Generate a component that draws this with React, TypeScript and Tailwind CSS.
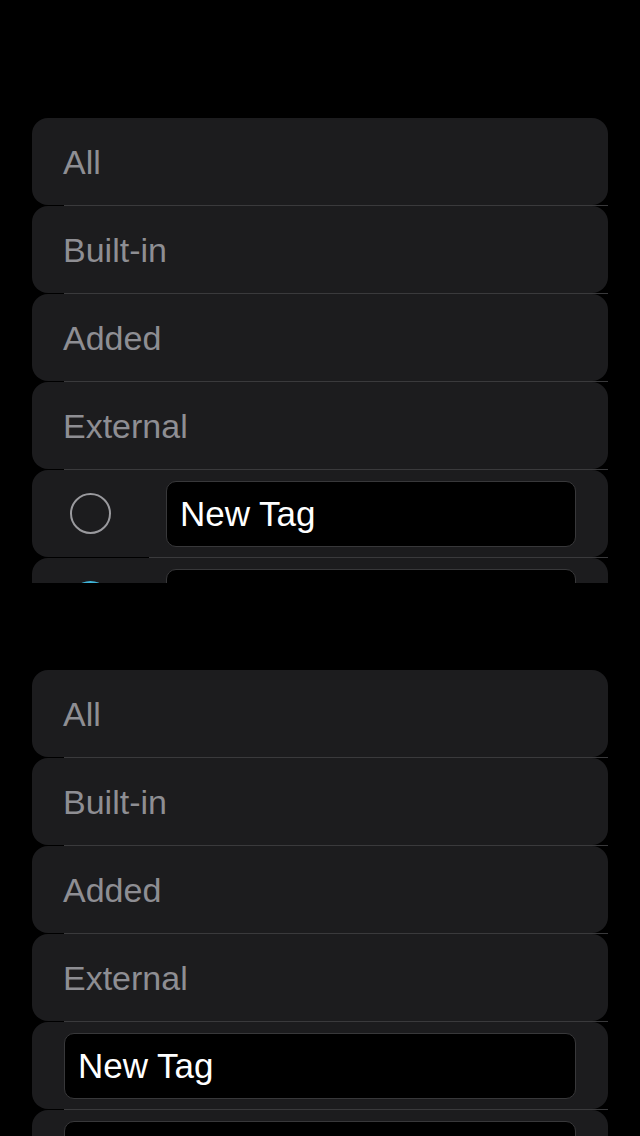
import React from "react";

const labels = ["All", "Built-in", "Added", "External"];

function LabelRow({ text }: { text: string }) {
  return (
    <>
      <div className="h-[87px] shrink-0 rounded-2xl bg-[#1c1c1e] flex items-center pl-[31px]">
        <span
          className="text-[34px] leading-none text-[#8e8e93]"
          style={{ fontFamily: '"Liberation Sans", Arial, sans-serif' }}
        >
          {text}
        </span>
      </div>
      <div className="h-px shrink-0 ml-[32px] bg-[#3a3a3c]" />
    </>
  );
}

function TagInput({ value }: { value: string }) {
  return (
    <div className="flex-1 h-[66px] rounded-[10px] border border-[#38383a] bg-black flex items-center pl-[13px]">
      <span
        className="text-[35px] leading-none text-white"
        style={{ fontFamily: '"Liberation Sans", Arial, sans-serif' }}
      >
        {value}
      </span>
    </div>
  );
}

function RadioRow({ value, selected }: { value: string; selected?: boolean }) {
  return (
    <>
      <div className="h-[87px] shrink-0 rounded-2xl bg-[#1c1c1e] flex items-center pl-[38px] pr-[32px]">
        {selected ? (
          <div className="w-[41px] h-[41px] rounded-full bg-[#3fb4d8] shrink-0" />
        ) : (
          <div className="w-[41px] h-[41px] rounded-full border-[2.5px] border-[#9a9a9e] shrink-0" />
        )}
        <div className="w-[55px] shrink-0" />
        <TagInput value={value} />
      </div>
      <div className="h-px shrink-0 ml-[117px] bg-[#3a3a3c]" />
    </>
  );
}

function PlainRow({ value }: { value: string }) {
  return (
    <>
      <div className="h-[87px] shrink-0 rounded-2xl bg-[#1c1c1e] flex items-center px-[32px]">
        <TagInput value={value} />
      </div>
      <div className="h-px shrink-0 ml-[32px] bg-[#3a3a3c]" />
    </>
  );
}

export default function App() {
  return (
    <div className="w-[640px] h-[1136px] bg-black overflow-hidden">
      <div className="pt-[118px] px-[32px]">
        <div className="h-[465px] overflow-hidden flex flex-col">
          {labels.map((l) => (
            <LabelRow key={l} text={l} />
          ))}
          <RadioRow value="New Tag" />
          <RadioRow value="" selected />
        </div>
        <div className="mt-[87px] flex flex-col">
          {labels.map((l) => (
            <LabelRow key={l} text={l} />
          ))}
          <PlainRow value="New Tag" />
          <PlainRow value="" />
        </div>
      </div>
    </div>
  );
}
